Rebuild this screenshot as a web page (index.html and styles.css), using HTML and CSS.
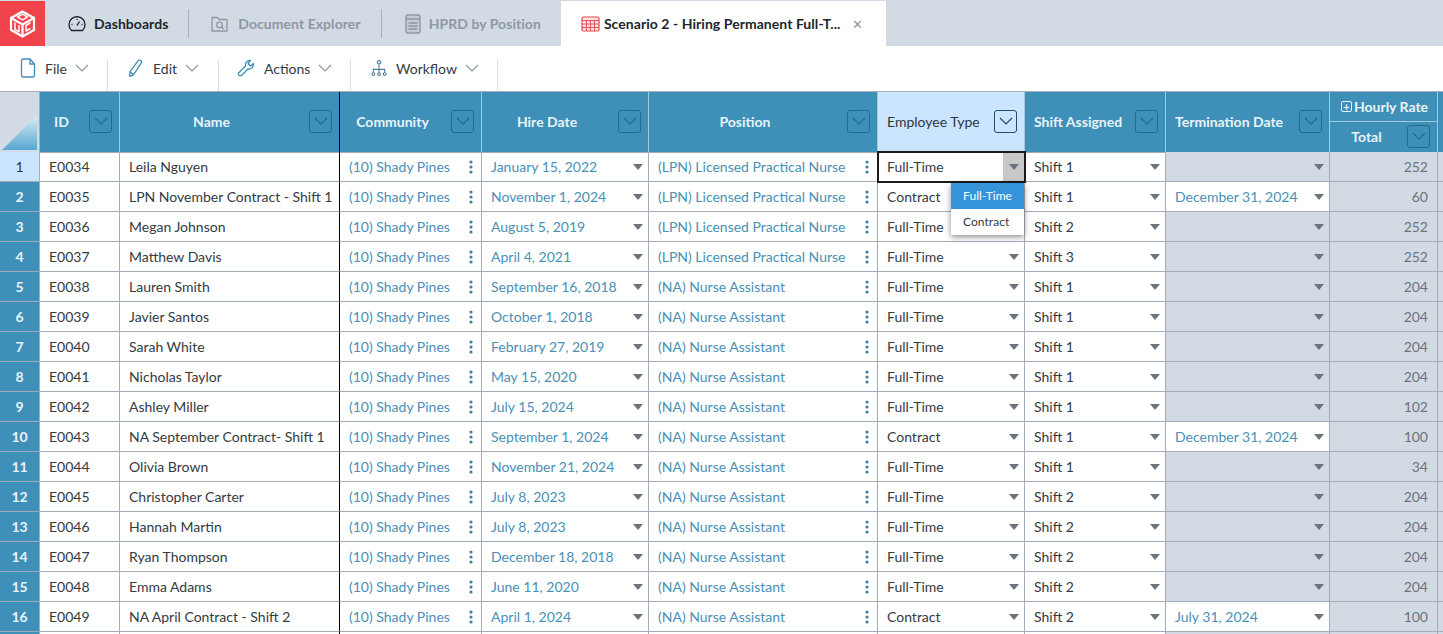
FILE: index.html
```html
<!DOCTYPE html>
<html lang="en">
<head>
    <meta charset="UTF-8">
    <title>Scenario 2 - Hiring Permanent Full-Time</title>
    <link rel="stylesheet" href="styles.css">
</head>
<body>

    <svg class="defs" width="0" height="0">
        <symbol id="dots" viewBox="0 0 4 14"><circle cx="2" cy="2" r="1.6"/><circle cx="2" cy="7" r="1.6"/><circle cx="2" cy="12" r="1.6"/></symbol>
        <symbol id="chev" viewBox="0 0 14 8"><path d="M1 1l6 6 6-6" fill="none" stroke="currentColor" stroke-width="1.2"/></symbol>
    </svg>

    <!-- Tabs -->
    <div class="tabbar">
        <div class="logo">
            <svg width="27" height="28" viewBox="0 0 26 28" fill="none" stroke="#fff" stroke-width="2.200" stroke-linejoin="round" stroke-linecap="round">
                <path d="M13 1.500L24.500 8v12L13 26.500 1.500 20V8z"/>
                <path d="M1.500 8L13 14.500 24.500 8M13 14.500v12"/>
                <path d="M8 7l5-2.800L18 7l-5 2.800zM5.500 13v6.500l4 2.300v-6M20.500 13l-4 2.500v5.500l4-2.300" stroke-width="1.500"/>
            </svg>
        </div>
        <div class="tab tab-dash">
            <svg width="18" height="16" viewBox="0 0 18 16" fill="none" stroke="#20262c" stroke-width="1.400" stroke-linejoin="round"><path d="M3.500 14.500a8 8 0 1 1 11 0z"/><path d="M9 9.500l2.500-4M3.500 8.500h1M13.500 8.500h1M9 3v1"/></svg>
            Dashboards
        </div>
        <div class="tab-sep"></div>
        <div class="tab tab-docs">
            <svg width="17" height="16" viewBox="0 0 17 16" fill="none" stroke="#8e98a4" stroke-width="1.300" stroke-linejoin="round"><path d="M1 1.500h5.500l1.500 2h8v11.500H1z"/><circle cx="8.500" cy="9" r="2.800"/><path d="M10.500 11l2 2"/></svg>
            Document Explorer
        </div>
        <div class="tab-sep"></div>
        <div class="tab tab-hprd">
            <svg width="16" height="20" viewBox="0 0 16 20" fill="#c3ccd6" stroke="#8e98a4" stroke-width="1.400"><rect x="1" y="1" width="14" height="18" rx="1.500"/><path d="M1 5h14M3.500 9h9M3.500 12h9M3.500 15h9" fill="none"/></svg>
            HPRD by Position
        </div>
        <div class="tab active">
            <svg width="19" height="16" viewBox="0 0 19 16" fill="#fde3e3" stroke="#e8474e" stroke-width="1.200"><rect x="1" y="1" width="17" height="14" rx="1.500"/><path d="M1 4.500h17M1 8h17M1 11.500h17M5.500 4.500V15M9.500 4.500V15M13.500 4.500V15" fill="none" stroke-width="0.900"/></svg>
            <span class="tab-title">Scenario 2 - Hiring Permanent Full-T...</span>
            <span class="tab-close">&#10005;</span>
        </div>
    </div>

    <!-- Toolbar -->
    <div class="toolbar">
        <div class="tool tool-file">
            <svg width="16" height="20" viewBox="0 0 16 20" fill="none" stroke="#3f8db5" stroke-width="1.300" stroke-linejoin="round"><path d="M3 1h7l4.500 5v11.500a1.500 1.500 0 0 1-1.500 1.500H3a1.500 1.500 0 0 1-1.500-1.500v-15A1.500 1.500 0 0 1 3 1zM10 1v5h4.500"/></svg>
            File <svg class="tool-chev"><use href="#chev"/></svg>
        </div>
        <div class="tool tool-edit">
            <svg width="16" height="20" viewBox="0 0 17 20" fill="none" stroke="#3f8db5" stroke-width="1.300" stroke-linejoin="round"><path d="M2 14L11 2c1-1 3.500 0 3.500 2L6 17l-4 2zM2 14l4 3"/></svg>
            Edit <svg class="tool-chev"><use href="#chev"/></svg>
        </div>
        <div class="tool tool-actions">
            <svg width="18" height="18" viewBox="0 0 18 18" fill="none" stroke="#3f8db5" stroke-width="1.300" stroke-linejoin="round"><path d="M1.500 14l7-7C8 4 10 1 13.500 1.500L11 4.500l2.500 2.500 3-2.500C16.500 9 14 10.500 11 10l-6.500 6.500c-1.500 1-4-1-3-2.500z"/></svg>
            Actions <svg class="tool-chev"><use href="#chev"/></svg>
        </div>
        <div class="tool tool-flow">
            <svg width="16" height="18" viewBox="0 0 17 18" fill="none" stroke="#4f7f9c" stroke-width="1.200"><circle cx="8.500" cy="3" r="1.800"/><path d="M8.500 5v9M2.500 14v-3.500h12V14"/><circle cx="2.500" cy="15.500" r="1.500"/><circle cx="8.500" cy="15.500" r="1.500"/><circle cx="14.500" cy="15.500" r="1.500"/></svg>
            Workflow <svg class="tool-chev"><use href="#chev"/></svg>
        </div>
    </div>

    <!-- Grid -->
    <div class="sheet">
        <div class="row head">
            <div class="corner"><div class="corner-tri"></div></div>
            <div class="h"><span class="h-left">ID</span><span class="fbtn"><svg><use href="#chev"/></svg></span></div>
            <div class="h name"><span class="h-mid">Name</span><span class="fbtn"><svg><use href="#chev"/></svg></span></div>
            <div class="h"><span class="h-mid">Community</span><span class="fbtn"><svg><use href="#chev"/></svg></span></div>
            <div class="h"><span class="h-mid">Hire Date</span><span class="fbtn"><svg><use href="#chev"/></svg></span></div>
            <div class="h"><span class="h-mid">Position</span><span class="fbtn"><svg><use href="#chev"/></svg></span></div>
            <div class="h h-sel"><span>Employee Type</span><span class="fbtn"><svg><use href="#chev"/></svg></span></div>
            <div class="h"><span>Shift Assigned</span><span class="fbtn"><svg><use href="#chev"/></svg></span></div>
            <div class="h"><span>Termination Date</span><span class="fbtn"><svg><use href="#chev"/></svg></span></div>
            <div class="h-stack">
                <div class="h-group"><span class="plus">+</span>Hourly Rate</div>
                <div class="h-total"><span class="h-mid">Total</span><span class="fbtn"><svg><use href="#chev"/></svg></span></div>
            </div>
            <div class="h h-end"></div>
        </div>

        <div class="row"><div class="rh rh-sel">1</div><div class="c">E0034</div><div class="c name">Leila Nguyen</div><div class="c link">(10) Shady Pines<svg class="dots"><use href="#dots"/></svg></div><div class="c link">January 15, 2022<i class="tri"></i></div><div class="c link">(LPN) Licensed Practical Nurse<svg class="dots"><use href="#dots"/></svg></div>
            <div class="c selected">Full-Time<span class="sel-arrow"><i class="tri"></i></span>
                <div class="menu"><div class="menu-item on">Full-Time</div><div class="menu-item">Contract</div></div>
            </div>
            <div class="c">Shift 1<i class="tri"></i></div><div class="c off"><i class="tri"></i></div><div class="c num">252</div><div class="c off"></div></div>
        <div class="row"><div class="rh">2</div><div class="c">E0035</div><div class="c name">LPN November Contract - Shift 1</div><div class="c link">(10) Shady Pines<svg class="dots"><use href="#dots"/></svg></div><div class="c link">November 1, 2024<i class="tri"></i></div><div class="c link">(LPN) Licensed Practical Nurse<svg class="dots"><use href="#dots"/></svg></div><div class="c">Contract<i class="tri"></i></div><div class="c">Shift 1<i class="tri"></i></div><div class="c link">December 31, 2024<i class="tri"></i></div><div class="c num">60</div><div class="c off"></div></div>
        <div class="row"><div class="rh">3</div><div class="c">E0036</div><div class="c name">Megan Johnson</div><div class="c link">(10) Shady Pines<svg class="dots"><use href="#dots"/></svg></div><div class="c link">August 5, 2019<i class="tri"></i></div><div class="c link">(LPN) Licensed Practical Nurse<svg class="dots"><use href="#dots"/></svg></div><div class="c">Full-Time<i class="tri"></i></div><div class="c">Shift 2<i class="tri"></i></div><div class="c off"><i class="tri"></i></div><div class="c num">252</div><div class="c off"></div></div>
        <div class="row"><div class="rh">4</div><div class="c">E0037</div><div class="c name">Matthew Davis</div><div class="c link">(10) Shady Pines<svg class="dots"><use href="#dots"/></svg></div><div class="c link">April 4, 2021<i class="tri"></i></div><div class="c link">(LPN) Licensed Practical Nurse<svg class="dots"><use href="#dots"/></svg></div><div class="c">Full-Time<i class="tri"></i></div><div class="c">Shift 3<i class="tri"></i></div><div class="c off"><i class="tri"></i></div><div class="c num">252</div><div class="c off"></div></div>
        <div class="row"><div class="rh">5</div><div class="c">E0038</div><div class="c name">Lauren Smith</div><div class="c link">(10) Shady Pines<svg class="dots"><use href="#dots"/></svg></div><div class="c link">September 16, 2018<i class="tri"></i></div><div class="c link">(NA) Nurse Assistant<svg class="dots"><use href="#dots"/></svg></div><div class="c">Full-Time<i class="tri"></i></div><div class="c">Shift 1<i class="tri"></i></div><div class="c off"><i class="tri"></i></div><div class="c num">204</div><div class="c off"></div></div>
        <div class="row"><div class="rh">6</div><div class="c">E0039</div><div class="c name">Javier Santos</div><div class="c link">(10) Shady Pines<svg class="dots"><use href="#dots"/></svg></div><div class="c link">October 1, 2018<i class="tri"></i></div><div class="c link">(NA) Nurse Assistant<svg class="dots"><use href="#dots"/></svg></div><div class="c">Full-Time<i class="tri"></i></div><div class="c">Shift 1<i class="tri"></i></div><div class="c off"><i class="tri"></i></div><div class="c num">204</div><div class="c off"></div></div>
        <div class="row"><div class="rh">7</div><div class="c">E0040</div><div class="c name">Sarah White</div><div class="c link">(10) Shady Pines<svg class="dots"><use href="#dots"/></svg></div><div class="c link">February 27, 2019<i class="tri"></i></div><div class="c link">(NA) Nurse Assistant<svg class="dots"><use href="#dots"/></svg></div><div class="c">Full-Time<i class="tri"></i></div><div class="c">Shift 1<i class="tri"></i></div><div class="c off"><i class="tri"></i></div><div class="c num">204</div><div class="c off"></div></div>
        <div class="row"><div class="rh">8</div><div class="c">E0041</div><div class="c name">Nicholas Taylor</div><div class="c link">(10) Shady Pines<svg class="dots"><use href="#dots"/></svg></div><div class="c link">May 15, 2020<i class="tri"></i></div><div class="c link">(NA) Nurse Assistant<svg class="dots"><use href="#dots"/></svg></div><div class="c">Full-Time<i class="tri"></i></div><div class="c">Shift 1<i class="tri"></i></div><div class="c off"><i class="tri"></i></div><div class="c num">204</div><div class="c off"></div></div>
        <div class="row"><div class="rh">9</div><div class="c">E0042</div><div class="c name">Ashley Miller</div><div class="c link">(10) Shady Pines<svg class="dots"><use href="#dots"/></svg></div><div class="c link">July 15, 2024<i class="tri"></i></div><div class="c link">(NA) Nurse Assistant<svg class="dots"><use href="#dots"/></svg></div><div class="c">Full-Time<i class="tri"></i></div><div class="c">Shift 1<i class="tri"></i></div><div class="c off"><i class="tri"></i></div><div class="c num">102</div><div class="c off"></div></div>
        <div class="row"><div class="rh">10</div><div class="c">E0043</div><div class="c name">NA September Contract- Shift 1</div><div class="c link">(10) Shady Pines<svg class="dots"><use href="#dots"/></svg></div><div class="c link">September 1, 2024<i class="tri"></i></div><div class="c link">(NA) Nurse Assistant<svg class="dots"><use href="#dots"/></svg></div><div class="c">Contract<i class="tri"></i></div><div class="c">Shift 1<i class="tri"></i></div><div class="c link">December 31, 2024<i class="tri"></i></div><div class="c num">100</div><div class="c off"></div></div>
        <div class="row"><div class="rh">11</div><div class="c">E0044</div><div class="c name">Olivia Brown</div><div class="c link">(10) Shady Pines<svg class="dots"><use href="#dots"/></svg></div><div class="c link">November 21, 2024<i class="tri"></i></div><div class="c link">(NA) Nurse Assistant<svg class="dots"><use href="#dots"/></svg></div><div class="c">Full-Time<i class="tri"></i></div><div class="c">Shift 1<i class="tri"></i></div><div class="c off"><i class="tri"></i></div><div class="c num">34</div><div class="c off"></div></div>
        <div class="row"><div class="rh">12</div><div class="c">E0045</div><div class="c name">Christopher Carter</div><div class="c link">(10) Shady Pines<svg class="dots"><use href="#dots"/></svg></div><div class="c link">July 8, 2023<i class="tri"></i></div><div class="c link">(NA) Nurse Assistant<svg class="dots"><use href="#dots"/></svg></div><div class="c">Full-Time<i class="tri"></i></div><div class="c">Shift 2<i class="tri"></i></div><div class="c off"><i class="tri"></i></div><div class="c num">204</div><div class="c off"></div></div>
        <div class="row"><div class="rh">13</div><div class="c">E0046</div><div class="c name">Hannah Martin</div><div class="c link">(10) Shady Pines<svg class="dots"><use href="#dots"/></svg></div><div class="c link">July 8, 2023<i class="tri"></i></div><div class="c link">(NA) Nurse Assistant<svg class="dots"><use href="#dots"/></svg></div><div class="c">Full-Time<i class="tri"></i></div><div class="c">Shift 2<i class="tri"></i></div><div class="c off"><i class="tri"></i></div><div class="c num">204</div><div class="c off"></div></div>
        <div class="row"><div class="rh">14</div><div class="c">E0047</div><div class="c name">Ryan Thompson</div><div class="c link">(10) Shady Pines<svg class="dots"><use href="#dots"/></svg></div><div class="c link">December 18, 2018<i class="tri"></i></div><div class="c link">(NA) Nurse Assistant<svg class="dots"><use href="#dots"/></svg></div><div class="c">Full-Time<i class="tri"></i></div><div class="c">Shift 2<i class="tri"></i></div><div class="c off"><i class="tri"></i></div><div class="c num">204</div><div class="c off"></div></div>
        <div class="row"><div class="rh">15</div><div class="c">E0048</div><div class="c name">Emma Adams</div><div class="c link">(10) Shady Pines<svg class="dots"><use href="#dots"/></svg></div><div class="c link">June 11, 2020<i class="tri"></i></div><div class="c link">(NA) Nurse Assistant<svg class="dots"><use href="#dots"/></svg></div><div class="c">Full-Time<i class="tri"></i></div><div class="c">Shift 2<i class="tri"></i></div><div class="c off"><i class="tri"></i></div><div class="c num">204</div><div class="c off"></div></div>
        <div class="row"><div class="rh">16</div><div class="c">E0049</div><div class="c name">NA April Contract - Shift 2</div><div class="c link">(10) Shady Pines<svg class="dots"><use href="#dots"/></svg></div><div class="c link">April 1, 2024<i class="tri"></i></div><div class="c link">(NA) Nurse Assistant<svg class="dots"><use href="#dots"/></svg></div><div class="c">Contract<i class="tri"></i></div><div class="c">Shift 2<i class="tri"></i></div><div class="c link">July 31, 2024<i class="tri"></i></div><div class="c num">100</div><div class="c off"></div></div>
        <div class="row"><div class="rh"></div><div class="c"></div><div class="c name"></div><div class="c"></div><div class="c"></div><div class="c"></div><div class="c"></div><div class="c"></div><div class="c off"></div><div class="c num"></div><div class="c off"></div></div>
    </div>

</body>
</html>
```

FILE: styles.css
```css
/* Global styling */
* {
    box-sizing: border-box;
}

html, body {
    height: 634px;
    overflow: hidden;
}

body {
    margin: 0;
    font-family: "Lato", "Liberation Sans", sans-serif;
    font-size: 14px;
    color: #333b43;
    background: #fff;
}

.defs {
    display: block;
    height: 0;
}

/* Tabs */
.tabbar {
    display: flex;
    align-items: stretch;
    height: 46px;
    padding-top: 1px;
    background-color: #d2dae4;
}

.logo {
    display: flex;
    align-items: center;
    justify-content: center;
    width: 45px;
    background-color: #f0434b;
}

.tab {
    display: flex;
    align-items: center;
    gap: 8px;
    font-weight: 700;
    letter-spacing: 0.05px;
    color: #8e98a4;
}

.tab-dash {
    padding: 0 20px 0 23px;
    color: #20262c;
}

.tab-docs {
    padding: 0 20px 0 22px;
    gap: 10px;
}

.tab-hprd {
    padding: 0 20px 0 23px;
    gap: 8px;
}

.tab-sep {
    width: 1px;
    height: 29px;
    margin-top: 8px;
    background-color: #a8b2bd;
}

.tab.active {
    width: 325px;
    padding: 0 0 0 20px;
    gap: 4px;
    color: #20262c;
    background-color: #fff;
}

.tab-close {
    margin-left: 8px;
    font-size: 13px;
    font-weight: 400;
    color: #8e98a4;
}

/* Toolbar */
.toolbar {
    display: flex;
    height: 45px;
    background-color: #fff;
}

.tool {
    display: flex;
    align-items: center;
    gap: 9px;
    height: 31px;
    margin-top: 14px;
    padding-bottom: 15px;
    border-right: 1px solid #d8dee5;
}

.tool-file { width: 108px; padding-left: 20px; }
.tool-edit { width: 111px; padding-left: 20px; }
.tool-actions { width: 132px; padding-left: 18px; }
.tool-flow { width: 147px; padding-left: 20px; }

.tool-chev {
    width: 14px;
    height: 8px;
    margin-left: -1px;
    color: #8e98a4;
}

/* Grid */
.sheet {
    border-top: 1px solid #a3adb9;
}

.row {
    display: grid;
    grid-template-columns: 40px 80px 220px 142px 167px 229px 147px 141px 164px 108px 1fr;
    height: 30px;
}

.row.head {
    height: 60px;
}

.corner {
    display: flex;
    align-items: flex-end;
    padding: 23px 2px 2px 2px;
    background-color: #d2dae4;
    border-right: 1px solid #a3adb9;
    border-bottom: 1px solid #a3adb9;
}

.corner-tri {
    width: 100%;
    height: 100%;
    background: linear-gradient(to bottom, #dcecf5, #58a7d3);
    clip-path: polygon(100% 0, 100% 100%, 0 100%);
}

.h {
    display: flex;
    align-items: center;
    justify-content: space-between;
    padding: 0 7px 2px 9px;
    font-weight: 700;
    color: #e8f3f9;
    background-color: #3f90b8;
    border-right: 1px solid #a3c8dc;
    border-bottom: 1px solid #a3adb9;
}

.h-left {
    padding-left: 5px;
}

.h-mid {
    flex: 1;
    padding-right: 15px;
    text-align: center;
}

.h-sel {
    font-weight: 400;
    color: #2e3640;
    background-color: #cce5ff;
}

.h-sel .fbtn {
    color: #1f4f6b;
    border-color: #1f4f6b;
}

.h-end {
    border-right: 0;
}

.fbtn {
    display: flex;
    align-items: center;
    justify-content: center;
    flex: none;
    width: 23px;
    height: 23px;
    color: #1f6c93;
    border: 1px solid #1f6c93;
    border-radius: 3px;
}

.fbtn svg {
    width: 14px;
    height: 8px;
}

.h-stack {
    display: grid;
    grid-template-rows: 30px 30px;
    font-weight: 700;
    color: #e8f3f9;
    background-color: #3f90b8;
    border-right: 1px solid #a3c8dc;
    border-bottom: 1px solid #a3adb9;
}

.h-group {
    display: flex;
    align-items: center;
    justify-content: center;
    gap: 2px;
    padding: 0 0 1px 2px;
    border-bottom: 1px solid #a3c8dc;
}

.plus {
    display: flex;
    align-items: center;
    justify-content: center;
    width: 11px;
    height: 11px;
    font-size: 11px;
    line-height: 1;
    border: 1px solid #e8f3f9;
    border-radius: 2px;
}

.h-total {
    display: flex;
    align-items: center;
    padding: 0 7px 2px 0;
}

.h-total .h-mid {
    padding-right: 4px;
}

.rh {
    display: flex;
    align-items: center;
    justify-content: center;
    font-weight: 700;
    color: #e8f3f9;
    background-color: #3f90b8;
    border-right: 1px solid #a3adb9;
    border-bottom: 1px solid #a3adb9;
}

.rh-sel {
    font-weight: 400;
    color: #2e3640;
    background-color: #cce5ff;
}

.c {
    display: flex;
    align-items: center;
    justify-content: space-between;
    min-width: 0;
    padding: 0 9px;
    white-space: nowrap;
    border-right: 1px solid #a3adb9;
    border-bottom: 1px solid #a3adb9;
}

/* Frozen pane edge */
.name {
    border-right-color: #000;
}

.link {
    color: #4a90b5;
}

.off {
    background-color: #d2dae4;
}

.num {
    justify-content: flex-end;
    color: #6b747d;
    background-color: #d2dae4;
}

.tri {
    flex: none;
    width: 0;
    height: 0;
    margin-right: -4px;
    border-left: 5px solid transparent;
    border-right: 5px solid transparent;
    border-top: 6px solid #6b747d;
}

.off .tri {
    margin-left: auto;
}

.dots {
    flex: none;
    width: 4px;
    height: 14px;
    margin-right: -1px;
    fill: #3f7f9f;
}

/* Selected cell and its dropdown */
.selected {
    position: relative;
    padding-right: 0;
    outline: 2px solid #1a1a1a;
    outline-offset: -1px;
    z-index: 2;
}

.sel-arrow {
    display: flex;
    align-items: center;
    justify-content: center;
    width: 21px;
    height: 100%;
    background-color: #c8c8c8;
}

.sel-arrow .tri {
    margin: 0;
}

.menu {
    position: absolute;
    top: 31px;
    right: 0;
    width: 73px;
    font-size: 12px;
    letter-spacing: 0.05px;
    background-color: #fff;
    box-shadow: 0 2px 6px rgba(0, 0, 0, 0.45);
}

.menu-item {
    height: 26px;
    line-height: 26px;
    padding-left: 12px;
}

.menu-item.on {
    color: #fff;
    background-color: #3593d9;
}
```
